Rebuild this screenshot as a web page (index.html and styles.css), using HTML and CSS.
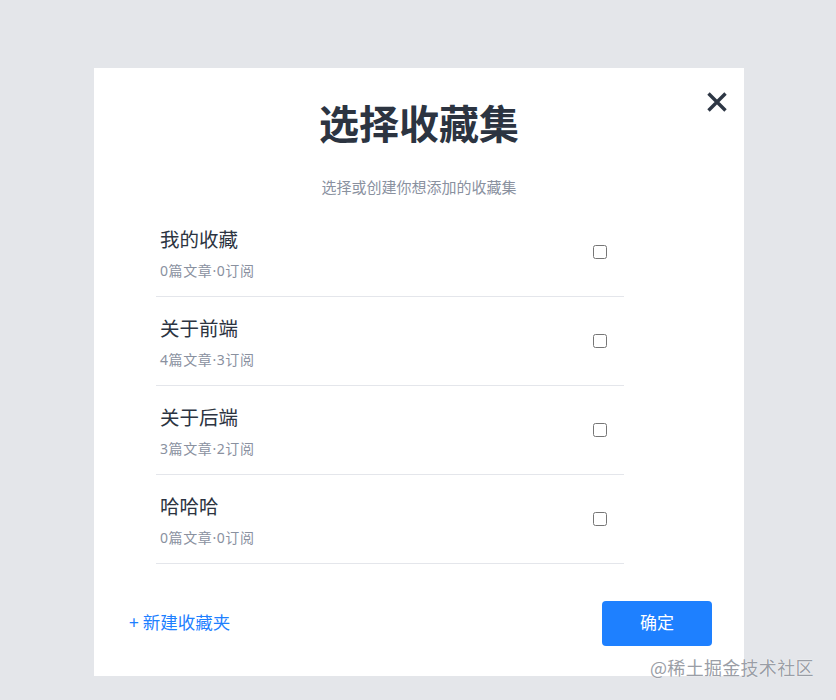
FILE: index.html
```html
<!DOCTYPE html>
<html lang="zh-CN">
<head>
<meta charset="utf-8">
<title>选择收藏集</title>
<link rel="stylesheet" href="styles.css">
</head>
<body>
<div class="modal">
  <button class="close" aria-label="关闭">
    <svg width="22" height="22" viewBox="0 0 22 22"><path d="M2.5 2.5 L19.5 19.5 M19.5 2.5 L2.5 19.5" stroke="#2e3745" stroke-width="3.4" stroke-linecap="butt" fill="none"/></svg>
  </button>
  <h1 class="title">选择收藏集</h1>
  <p class="subtitle">选择或创建你想添加的收藏集</p>
  <ul class="list">
    <li class="item">
      <div class="info"><div class="name">我的收藏</div><div class="meta">0篇文章·0订阅</div></div>
      <input type="checkbox" class="check">
    </li>
    <li class="item">
      <div class="info"><div class="name">关于前端</div><div class="meta">4篇文章·3订阅</div></div>
      <input type="checkbox" class="check">
    </li>
    <li class="item">
      <div class="info"><div class="name">关于后端</div><div class="meta">3篇文章·2订阅</div></div>
      <input type="checkbox" class="check">
    </li>
    <li class="item">
      <div class="info"><div class="name">哈哈哈</div><div class="meta">0篇文章·0订阅</div></div>
      <input type="checkbox" class="check">
    </li>
  </ul>
  <div class="footer">
    <a class="new" href="#">+ 新建收藏夹</a>
    <button class="ok">确定</button>
  </div>
</div>
<div class="watermark">@稀土掘金技术社区</div>
</body>
</html>
```

FILE: styles.css
```css
html, body {
  margin: 0;
  padding: 0;
}
body {
  background: #e4e6ea;
  font-family: "Noto Sans CJK SC", "Noto Sans", "Liberation Sans", sans-serif;
  width: 836px;
  height: 700px;
  position: relative;
  overflow: hidden;
}
.modal {
  position: relative;
  box-sizing: border-box;
  width: 650px;
  height: 608px;
  margin: 68px 0 0 94px;
  background: #fff;
  padding: 0;
  display: flex;
  flex-direction: column;
}
.close {
  position: absolute;
  top: 23px;
  right: 16px;
  width: 22px;
  height: 22px;
  padding: 0;
  border: 0;
  background: none;
  line-height: 0;
}
.title {
  margin: 27px 0 0;
  text-align: center;
  font-size: 40px;
  line-height: 54px;
  font-weight: 700;
  color: #2c3441;
}
.subtitle {
  margin: 27px 0 0;
  text-align: center;
  font-size: 15px;
  line-height: 22px;
  color: #8a919f;
}
.list {
  list-style: none;
  margin: 10px 0 0 62px;
  padding: 0;
  width: 468px;
}
.item {
  display: flex;
  align-items: center;
  justify-content: space-between;
  height: 88px;
  border-bottom: 1px solid #e4e6eb;
  padding: 0 17px 0 4px;
  box-sizing: content-box;
  width: 447px;
}
.info {
  display: flex;
  flex-direction: column;
  padding-top: 2px;
}
.name {
  font-size: 19.5px;
  line-height: 28px;
  color: #2c3441;
}
.meta {
  margin-top: 8px;
  font-family: "Noto Sans", "Noto Sans CJK SC", sans-serif;
  font-size: 14px;
  line-height: 20px;
  letter-spacing: 0.6px;
  color: #8a919f;
}
.check {
  width: 14px;
  height: 14px;
  margin: 0;
  accent-color: #1e80ff;
}
.footer {
  margin-top: auto;
  display: flex;
  align-items: center;
  justify-content: space-between;
  padding: 0 32px 30px 35px;
}
.new {
  font-size: 17.5px;
  line-height: 22px;
  color: #1e80ff;
  text-decoration: none;
  margin-top: -3px;
}
.ok {
  width: 110px;
  height: 45px;
  border: 0;
  border-radius: 4px;
  background: #1e80ff;
  color: #fff;
  font-family: inherit;
  font-size: 17px;
  line-height: 22px;
  padding: 0 0 4px;
}
.watermark {
  position: absolute;
  left: 650px;
  top: 655px;
  font-size: 18px;
  line-height: 24px;
  color: #9a9ea6;
  text-shadow: 0 0 1px #fff, 0 0 1px #fff;
  letter-spacing: 0.3px;
}
```
